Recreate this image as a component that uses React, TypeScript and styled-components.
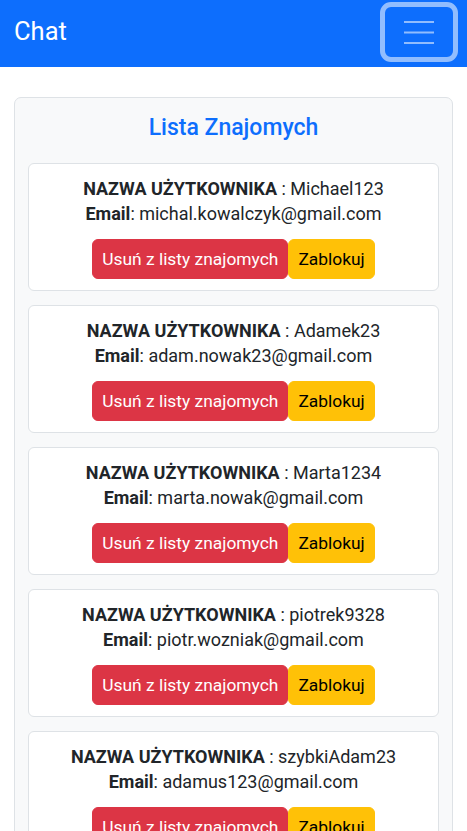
import React from 'react';
import styled, { createGlobalStyle } from 'styled-components';

const GlobalStyle = createGlobalStyle`
  * { box-sizing: border-box; }
  body {
    margin: 0;
    font-family: Roboto, "Liberation Sans", Arial, sans-serif;
    font-size: 18px;
    line-height: 25.5px;
    color: #212529;
    background: #fff;
  }
`;

const Navbar = styled.nav`
  display: flex;
  justify-content: space-between;
  align-items: center;
  height: 67px;
  padding: 0 9px 0 14px;
  background: #0d6efd;
`;

const Brand = styled.a`
  margin-bottom: 4px;
  color: #fff;
  font-size: 25.5px;
  line-height: 1;
  text-decoration: none;
`;

const Toggler = styled.button`
  display: flex;
  align-items: center;
  justify-content: center;
  width: 78px;
  height: 60px;
  margin-bottom: 3px;
  padding: 0;
  border: 5px solid rgba(255, 255, 255, 0.55);
  border-radius: 11px;
  background: transparent;
  cursor: pointer;
`;

const Main = styled.main`
  padding: 30px 14px 0;
`;

const Panel = styled.section`
  padding: 16px 13px 13px;
  background: #f8f9fa;
  border: 1px solid #dee2e6;
  border-radius: 7px;
`;

const Title = styled.h4`
  margin: 0 0 21px;
  font-size: 23px;
  font-weight: 500;
  line-height: 1.2;
  text-align: center;
  color: #0d6efd;
`;

const List = styled.div`
  display: flex;
  flex-direction: column;
  gap: 14px;
`;

const FriendCard = styled.div`
  padding: 12px 12px 11px;
  background: #fff;
  border: 1px solid #dee2e6;
  border-radius: 6px;
  text-align: center;
`;

const Line = styled.p`
  margin: 0;
`;

const Actions = styled.div`
  display: flex;
  justify-content: center;
  margin-top: 12px;
`;

const Button = styled.button<{ $variant: 'danger' | 'warning' }>`
  height: 40px;
  padding: 0 9px;
  font-family: inherit;
  font-size: 17.4px;
  line-height: 1.5;
  border: 1px solid ${(p) => (p.$variant === 'danger' ? '#dc3545' : '#ffc107')};
  border-radius: 6px;
  background: ${(p) => (p.$variant === 'danger' ? '#dc3545' : '#ffc107')};
  color: ${(p) => (p.$variant === 'danger' ? '#fff' : '#000')};
  cursor: pointer;
`;

const friends = [
  { username: 'Michael123', email: 'michal.kowalczyk@gmail.com' },
  { username: 'Adamek23', email: 'adam.nowak23@gmail.com' },
  { username: 'Marta1234', email: 'marta.nowak@gmail.com' },
  { username: 'piotrek9328', email: 'piotr.wozniak@gmail.com' },
  { username: 'szybkiAdam23', email: 'adamus123@gmail.com' },
];

export default function App() {
  return (
    <>
      <GlobalStyle />
      <Navbar>
        <Brand href="#">Chat</Brand>
        <Toggler aria-label="Toggle navigation">
          <svg width="30" height="24" viewBox="0 0 30 24">
            <path
              d="M0 2h30M0 12.5h30M0 23h30"
              stroke="rgba(255,255,255,0.55)"
              strokeWidth="2"
            />
          </svg>
        </Toggler>
      </Navbar>
      <Main>
        <Panel>
          <Title>Lista Znajomych</Title>
          <List>
            {friends.map((f) => (
              <FriendCard key={f.username}>
                <Line>
                  <b>NAZWA UŻYTKOWNIKA</b> : {f.username}
                </Line>
                <Line>
                  <b>Email</b>: {f.email}
                </Line>
                <Actions>
                  <Button $variant="danger">Usuń z listy znajomych</Button>
                  <Button $variant="warning">Zablokuj</Button>
                </Actions>
              </FriendCard>
            ))}
          </List>
        </Panel>
      </Main>
    </>
  );
}
